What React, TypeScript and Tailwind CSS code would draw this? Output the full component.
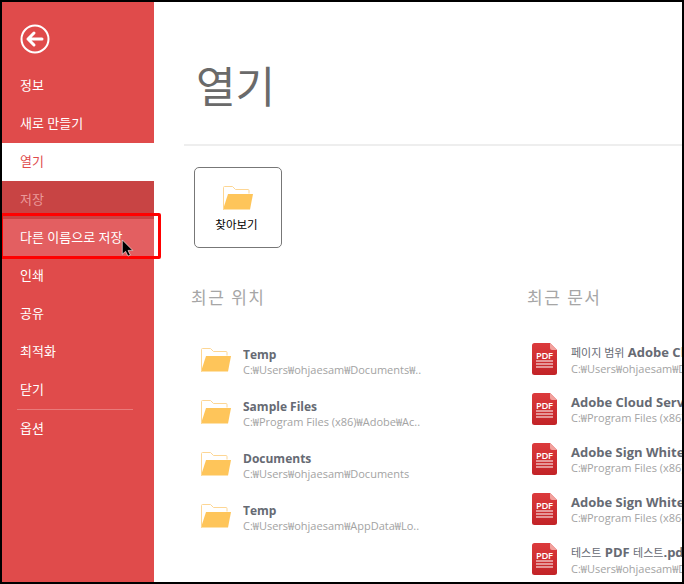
import React from 'react';

const font = { fontFamily: '"Open Sans", "Noto Sans CJK KR", sans-serif' };

const FolderIcon = ({ className }: { className: string }) => (
  <svg viewBox="0 0 30 24" className={className}>
    <path d="M0.5 23.5V1.5q0-1 1-1h8l3 3h12.5q1 0 1 1v3" fill="#fff" stroke="#fdd694" strokeWidth="1" />
    <path d="M5 8h25l-3 15.5H0z" fill="#fec55a" />
    <path d="M0 3h1v20H0z" fill="#fdd694" />
  </svg>
);

const PdfIcon = ({ id }: { id: number }) => (
  <svg viewBox="0 0 25 32" className="w-[25px] h-[32px] shrink-0">
    <defs>
      <linearGradient id={`pdf-${id}`} x1="0" y1="0" x2="0" y2="1">
        <stop offset="0" stopColor="#dc3a3c" />
        <stop offset="1" stopColor="#c22327" />
      </linearGradient>
    </defs>
    <path d="M2.5 0h15.5l7 7v22.5q0 2.5-2.5 2.5h-20q-2.5 0-2.5-2.5V2.5q0-2.5 2.5-2.5z" fill={`url(#pdf-${id})`} />
    <path d="M18 0l7 7h-5q-2 0-2-2z" fill="#f2a09c" />
    <text x="4" y="16" fontSize="9.5" fontWeight="600" fill="#fff" textLength="17" fontFamily="Open Sans, sans-serif">PDF</text>
    <path d="M4 17.5h17v1H4zM4 20.5h17v1H4zM4 23.5h17v1H4z" fill="#fff" />
  </svg>
);

const menu = [
  { label: '정보', cls: 'text-white' },
  { label: '새로 만들기', cls: 'text-white' },
  { label: '열기', cls: 'bg-white text-[#e04b4b]' },
  { label: '저장', cls: 'bg-[#c84444] text-[#ea9a9a]' },
  { label: '다른 이름으로 저장', cls: 'bg-[#e35f61] text-white' },
  { label: '인쇄', cls: 'text-white' },
  { label: '공유', cls: 'text-white' },
  { label: '최적화', cls: 'text-white' },
  { label: '닫기', cls: 'text-white' },
];

const places = [
  { name: 'Temp', path: 'C:₩Users₩ohjaesam₩Documents₩..' },
  { name: 'Sample Files', path: 'C:₩Program Files (x86)₩Adobe₩Ac..' },
  { name: 'Documents', path: 'C:₩Users₩ohjaesam₩Documents' },
  { name: 'Temp', path: 'C:₩Users₩ohjaesam₩AppData₩Lo..' },
];

const Ko = ({ children }: { children: React.ReactNode }) => (
  <span className="text-[11px] font-normal">{children}</span>
);

const docs = [
  { name: <><Ko>페이지 범위</Ko> Adobe Cloud</>, path: 'C:₩Users₩ohjaesam₩Documents' },
  { name: <>Adobe Cloud Services</>, path: 'C:₩Program Files (x86)₩Adobe' },
  { name: <>Adobe Sign White Paper</>, path: 'C:₩Program Files (x86)₩Adobe' },
  { name: <>Adobe Sign White Paper</>, path: 'C:₩Program Files (x86)₩Adobe' },
  { name: <><Ko>테스트</Ko> PDF <Ko>테스트</Ko>.pdf</>, path: 'C:₩Users₩ohjaesam₩Documents' },
];

export default function App() {
  return (
    <div className="w-[684px] h-[584px] border-2 border-black bg-white flex overflow-hidden" style={font}>
      <aside className="relative w-[152px] shrink-0 bg-[#e04b4b] flex flex-col">
        <div className="h-[65px] shrink-0 pl-[18px] pt-[22px]">
          <svg viewBox="0 0 30 30" className="w-[30px] h-[30px]">
            <circle cx="15" cy="15" r="13.5" fill="none" stroke="#fff" strokeWidth="2" />
            <path d="M8 15h14M14 9l-6 6 6 6" fill="none" stroke="#fff" strokeWidth="3" strokeLinecap="round" strokeLinejoin="round" />
          </svg>
        </div>
        {menu.map((m) => (
          <div key={m.label} className={`h-[38px] shrink-0 pl-[18px] pb-[1px] flex items-center text-[13px] ${m.cls}`}>
            {m.label}
          </div>
        ))}
        <div className="ml-[15px] mr-[21px] h-px bg-[#e97a7a]" />
        <div className="h-[38px] pl-[18px] flex items-center text-[13px] text-white">옵션</div>

        <div className="absolute left-[-2px] top-[211px] w-[161px] h-[46px] border-[3px] border-[#ff0000] rounded-[2px]" />
        <svg viewBox="0 0 14 20" className="absolute left-[119px] top-[237px] w-[14px] h-[19px]">
          <path d="M1 1v15l3.5-3 2.5 5 2.5-1-2.5-5h5z" fill="#000" stroke="#fff" strokeWidth="0.6" />
        </svg>
      </aside>

      <main className="flex-1 min-w-0 pt-[55px] overflow-hidden">
        <h1 className="pl-[42px] text-[43px] leading-[60px] text-[#6a6a6a]">열기</h1>
        <div className="ml-[30px] mt-[27px] h-[2px] bg-[#eeeeee]" />

        <button className="ml-[40px] mt-[21px] w-[88px] h-[81px] border border-[#777777] rounded-[5px] flex flex-col items-center pt-[18px]">
          <FolderIcon className="w-[30px] h-[24px]" />
          <span className="mt-[7px] -ml-[3px] text-[11.5px] leading-[16px] text-black">찾아보기</span>
        </button>

        <div className="flex mt-[37px]">
          <section className="w-[373px] shrink-0 pl-[37px]">
            <h2 className="text-[17px] leading-[26px] text-[#a6a6a6] tracking-[1.5px]">최근 위치</h2>
            <div className="mt-[34px] flex flex-col gap-[18px]">
              {places.map((p, i) => (
                <div key={i} className="flex items-start pl-[10px] h-[34px]">
                  <FolderIcon className="w-[30px] h-[24px] shrink-0 mt-[3px]" />
                  <div className="ml-[12px] pt-[2px] w-[182px] whitespace-nowrap overflow-hidden">
                    <div className="text-[12px] leading-[15px] font-bold text-[#666a73]">{p.name}</div>
                    <div className="text-[11px] leading-[15px] text-[#a3a3a3]">{p.path}</div>
                  </div>
                </div>
              ))}
            </div>
          </section>

          <section className="flex-1 min-w-0">
            <h2 className="text-[17px] leading-[26px] text-[#a6a6a6] tracking-[1.5px]">최근 문서</h2>
            <div className="mt-[32px] flex flex-col gap-[18px] pl-[5px]">
              {docs.map((d, i) => (
                <div key={i} className="flex items-start h-[32px]">
                  <PdfIcon id={i} />
                  <div className="ml-[14px] pt-[1px] whitespace-nowrap">
                    <div className="text-[13px] leading-[16px] font-bold text-[#666a73]">{d.name}</div>
                    <div className="text-[11px] leading-[15px] text-[#a3a3a3]">{d.path}</div>
                  </div>
                </div>
              ))}
            </div>
          </section>
        </div>
      </main>
    </div>
  );
}
